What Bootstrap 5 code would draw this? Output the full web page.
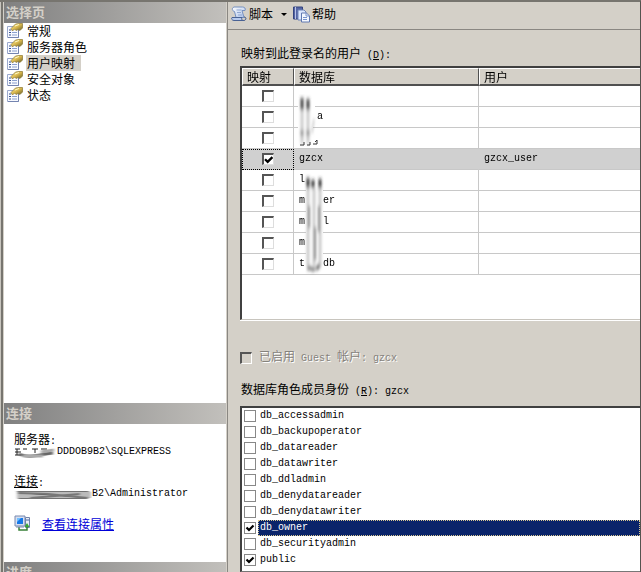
<!DOCTYPE html>
<html lang="zh-CN">
<head>
<meta charset="utf-8">
<meta name="viewport" content="width=device-width, initial-scale=1">
<title>用户映射</title>
<link href="https://cdn.jsdelivr.net/npm/bootstrap@5.3.0/dist/css/bootstrap.min.css" rel="stylesheet">
<style>
body{background:#d4d0c8;color:#000;font:12px/16px "Noto Sans CJK SC",sans-serif}
.window{border-top:2px solid #77756f;border-right:1px solid #55534f}
.mono{font-family:"Liberation Mono","Noto Sans CJK SC",monospace;font-size:10px}
.side{width:228px;border-left:1px solid #c8c5be;border-right:1px solid #8a8782;padding-right:1px}
.side-inner{border-left:2px solid #77756f;padding-left:1px}
.side-title{height:21px;line-height:20px;padding-left:2px;font-size:13px;font-weight:700;color:#d4d0c8;background:linear-gradient(90deg,#808080,#c2c0bc);margin:0}
.pages{height:380px;padding-left:3px}
.page-link-row{height:16px;color:#000;text-decoration:none;gap:3px}
.page-link-row span{padding:0 6px 0 1px;line-height:15px}
.page-link-row.active span{background:#d4d0c8}
.conn{height:138px;padding:9px 10px;line-height:12px}
.conn .mono{line-height:10px}
.conn a{color:#0000d8}
.account{margin-top:16px}
.props{margin-top:14px}
.toolbar{height:28px;border-bottom:1px solid #8a8782;padding:0 0 3px 3px}
.tool{border:0;background:none;padding:0;gap:2px;color:#000}
.content{padding:15px 0 0 12px}
.caption-row{padding-left:1px}
.well{border:2px solid #404040;border-right:0;border-bottom:0;background:#fff}
.grid-well{height:254px;margin-top:2px;border-bottom:1px solid #c8c5be;box-shadow:0 1px #fff}
.grid{width:100%;table-layout:fixed;border-collapse:separate;border-spacing:0;will-change:transform}
.grid th{height:18px;padding:0 4px;background:#d4d0c8;font-weight:400;line-height:15px;border:1px solid #fff;border-right-color:#505050;border-bottom:2px solid #505050}
.grid th:last-child{border-right:0}
.grid td{height:21px;padding:0 5px;line-height:20px;border-bottom:1px solid #c8c8c8;border-right:1px solid #c8c8c8}
.grid td:last-child{border-right:0}
.grid td:first-child{text-align:center}
.grid tr.picked td{background:#d0d0d0;border-right-color:#d0d0d0}
.grid tr.picked td:first-child{outline:1px dotted #000;outline-offset:-1px}
.c1{width:52px}.c2{width:185px}
.gap1{display:inline-block;width:18px}
.smudge{position:absolute;left:55px;top:26px;pointer-events:none}
.box{appearance:none;width:12px;height:12px;margin:0;background:#fff center/10px 10px no-repeat;border:1px solid #888;border-radius:0;flex:none}
.box:checked{background-image:url("data:image/svg+xml,%3Csvg xmlns='http://www.w3.org/2000/svg' viewBox='0 0 10 10'%3E%3Cpath d='M1.5 4.5 4 7 8.5 2.5' fill='none' stroke='%23000' stroke-width='2.2'/%3E%3C/svg%3E")}
.grid .box{display:block;margin:0 auto}
.grid .box,.guest .box{border:2px solid #555;border-right:1px solid #ddd;border-bottom:1px solid #ddd}
.guest{margin-top:28px;gap:7px;color:#85827c;text-shadow:1px 1px #fff}
.guest .box{background-color:#d4d0c8;border-right-color:#fff;border-bottom-color:#fff}
.roles-title{margin-top:14px;padding-left:1px}
.roles{margin-top:6px;height:166px;border-bottom:1px solid #777}
.role{height:16px;padding-left:2px}
.role label{flex:1;margin-left:2px;padding-left:2px;line-height:15px;height:16px}
.role.picked label{background:#0a246a;color:#fff;outline:1px dotted #d8c890;outline-offset:-1px}
</style>
<script src="https://cdn.jsdelivr.net/npm/bootstrap@5.3.0/dist/js/bootstrap.bundle.min.js"></script>
</head>
<body>
<svg width="0" height="0" class="position-absolute" aria-hidden="true">
<defs>
<linearGradient id="gold" x1="0" y1="0" x2="1" y2="1"><stop offset="0" stop-color="#fff3a0"/><stop offset=".5" stop-color="#d8b64c"/><stop offset="1" stop-color="#5c5a28"/></linearGradient>
<linearGradient id="sheet" x1="0" y1="0" x2="1" y2="1"><stop offset="0" stop-color="#fff"/><stop offset="1" stop-color="#a9bfe8"/></linearGradient>
<filter id="soft" x="-50%" y="-20%" width="200%" height="140%"><feGaussianBlur stdDeviation="1 2"/></filter>
<filter id="softline" x="-10%" y="-50%" width="120%" height="200%"><feGaussianBlur stdDeviation="1.5 .6"/></filter>
<symbol id="prop" viewBox="0 0 16 16">
<path d="M.5 3.500h11v11H.5z" fill="#f8faff" stroke="#9aa8cc"/><path d="M11.500 6v8.500H1" fill="none" stroke="#7484b0"/>
<path d="M2 7h2M2 9.500h2M2 12h2" stroke="#35508f"/><path d="M5 9.500h5M5 12h5" stroke="#8ba0cf"/>
<path d="M4 5.500 8.500 1 12 .5h3.500V5L13 7.500l-2-1-2 1L7.500 6 5.500 8z" fill="url(#gold)" stroke="#8b752f" stroke-width=".7"/><path d="M8 3l4-1.500" stroke="#fff8c4"/>
</symbol>
</defs>
</svg>
<div class="window d-flex vh-100 overflow-hidden">
<aside class="side flex-shrink-0 overflow-hidden">
<div class="side-inner h-100">
<h2 class="side-title">选择页</h2>
<nav class="pages bg-white d-flex flex-column align-items-start">
<a href="#" class="page-link-row d-flex"><svg width="16" height="16"><use href="#prop"/></svg><span>常规</span></a>
<a href="#" class="page-link-row d-flex"><svg width="16" height="16"><use href="#prop"/></svg><span>服务器角色</span></a>
<a href="#" class="page-link-row d-flex active" aria-current="page"><svg width="16" height="16"><use href="#prop"/></svg><span>用户映射</span></a>
<a href="#" class="page-link-row d-flex"><svg width="16" height="16"><use href="#prop"/></svg><span>安全对象</span></a>
<a href="#" class="page-link-row d-flex"><svg width="16" height="16"><use href="#prop"/></svg><span>状态</span></a>
</nav>
<h2 class="side-title">连接</h2>
<div class="conn bg-white">
<div>服务器<span class="mono">:</span></div>
<div class="mono d-flex"><svg width="43" height="12"><path d="M1 2h5M3 2v6M1 8h6M9 2h4M18 2h6M21 2v4M27 2h6M1 5h6" stroke="#222" fill="none"/><g filter="url(#softline)"><path d="M5 7c10 5 22 0 34-1" stroke="#666" stroke-width="3" fill="none"/><path d="M27 5l13-2M9 9h20" stroke="#aaa" stroke-width="3"/></g></svg><span>DDDOB9B2\SQLEXPRESS</span></div>
<div class="account"><u>连接</u><span class="mono">:</span></div>
<div class="mono d-flex"><svg width="78" height="12"><g filter="url(#softline)"><path d="M3 3h72M4 9h70" stroke="#444" stroke-width="1.500"/><path d="M3 6h74" stroke="#bbb" stroke-width="6"/><path d="M4 4l30 1 40 4M16 9l50-4" stroke="#777" stroke-width="2"/></g></svg><span>B2\Administrator</span></div>
<div class="props d-flex gap-2 align-items-center">
<svg width="20" height="18" viewBox="0 0 20 18"><path d="M1 1h10v10H1z" fill="#d6def0" stroke="#7889ae"/><path d="M3 3h6v6H3z" fill="#1678e8"/><path d="M3 3h4L3 7z" fill="#72bfff"/><path d="M11.500 2.500h4v10h-4z" fill="#e8edf7" stroke="#7082a8"/><path d="M12 5h3" stroke="#5068a0"/><path d="M5 12v3h8v-4m0 4h-8" fill="none" stroke="#388038" stroke-width="1.500"/><path d="M10.500 12 13 8l2.500 4z" fill="#37a737"/><path d="M2 12h8" stroke="#7889ae"/></svg>
<a href="#">查看连接属性</a></div>
</div>
<h2 class="side-title">进度</h2>
</div>
</aside>
<main class="flex-grow-1 overflow-hidden">
<div class="toolbar d-flex align-items-center">
<button type="button" class="tool d-flex align-items-center"><svg width="16" height="16" viewBox="0 0 16 16"><path d="M3 1h8.500c2 0 3.500 1.500 2.500 3.500h-3l2 7H5L3.500 5.500C1 5 .5 2 3 1z" fill="url(#sheet)" stroke="#7590c0"/><path d="M1 11.500h10c-1 2 0 3 2 3H3c-2 0-3-2-2-3z" fill="#b8cbee" stroke="#496294"/><path d="M13 11c2.500 0 2.500 3 0 3.500" fill="none" stroke="#354f82"/><path d="M5.500 4h5M6 6.500h4M7 9h4" stroke="#90a8d2"/></svg><span>脚本</span><svg width="14" height="8" class="ms-1"><path d="M2 3h6L5 6z"/></svg></button>
<button type="button" class="tool d-flex align-items-center"><svg width="17" height="17" viewBox="0 0 17 17"><path d="M.5 1h9v12h-9z" fill="#5565a5" stroke="#35447e"/><path d="M2.500 1v12" stroke="#b9c4e8"/><path d="M5 4h6l2 2v8H5z" fill="#dbe7ff" stroke="#7186b7"/><path d="M8.500 7h5l3 3v6h-8z" fill="#f4f8ff" stroke="#6079b0"/><path d="M13 7v3h3M10 11.500h4M10 13.500h4" fill="none" stroke="#7893cc"/></svg><span>帮助</span></button>
</div>
<div class="content">
<div class="caption-row">映射到此登录名的用户<span class="mono"> (<u>D</u>):</span></div>
<div class="well grid-well position-relative">
<table class="grid">
<colgroup><col class="c1"><col class="c2"><col></colgroup>
<thead><tr><th>映射</th><th>数据库</th><th>用户</th></tr></thead>
<tbody class="mono">
<tr><td><input class="box" type="checkbox" aria-label="映射 1"></td><td></td><td></td></tr>
<tr><td><input class="box" type="checkbox" aria-label="映射 2"></td><td><span class="gap1"></span>a</td><td></td></tr>
<tr><td><input class="box" type="checkbox" aria-label="映射 3"></td><td></td><td></td></tr>
<tr class="picked"><td><input class="box" type="checkbox" aria-label="映射 gzcx" checked></td><td>gzcx</td><td>gzcx_user</td></tr>
<tr><td><input class="box" type="checkbox" aria-label="映射 5"></td><td>l</td><td></td></tr>
<tr><td><input class="box" type="checkbox" aria-label="映射 6"></td><td>m<span class="gap1"></span>er</td><td></td></tr>
<tr><td><input class="box" type="checkbox" aria-label="映射 7"></td><td>m<span class="gap1"></span>l</td><td></td></tr>
<tr><td><input class="box" type="checkbox" aria-label="映射 8"></td><td>m</td><td></td></tr>
<tr><td><input class="box" type="checkbox" aria-label="映射 9"></td><td>t<span class="gap1"></span>db</td><td></td></tr>
</tbody>
</table>
<svg class="smudge" width="30" height="184" viewBox="0 0 30 184" aria-hidden="true">
<path d="M1 2h17v16l-2 15v21H1zM9 84h17v96H9z" fill="#fff"/>
<g filter="url(#soft)" fill="none" stroke-width="3"><path d="M5 4v12M11 5v11" stroke="#444"/><path d="M5 16v34M11 16v34" stroke="#ccc"/><path d="M17 25l-2 14" stroke="#aaa" stroke-width="1"/><path d="M5 36v6M11 36v6" stroke="#999"/>
<path d="M11 84v10M16 86v8M23 85v10" stroke="#333"/><path d="M11 94v78M17 94v78M23 94v78" stroke="#ccc"/><path d="M12 112v22M22 112v26M18 133v33" stroke="#888" stroke-width="2"/><path d="M10 174h4M14 175h4M19 175l4-4" stroke="#444"/></g>
<path d="M3 51h4v-3M10 51h3v-3M16 50h4v-4l-2 2" fill="none" stroke="#333"/>
</svg>
</div>
<div class="guest d-flex align-items-center"><input class="box" type="checkbox" id="guest" disabled><label for="guest">已启用<span class="mono"> Guest </span>帐户<span class="mono">: gzcx</span></label></div>
<div class="roles-title">数据库角色成员身份<span class="mono"> (<u>R</u>): gzcx</span></div>
<div class="well roles mono">
<div class="role d-flex align-items-center"><input class="box" type="checkbox" id="r1"><label for="r1">db_accessadmin</label></div>
<div class="role d-flex align-items-center"><input class="box" type="checkbox" id="r2"><label for="r2">db_backupoperator</label></div>
<div class="role d-flex align-items-center"><input class="box" type="checkbox" id="r3"><label for="r3">db_datareader</label></div>
<div class="role d-flex align-items-center"><input class="box" type="checkbox" id="r4"><label for="r4">db_datawriter</label></div>
<div class="role d-flex align-items-center"><input class="box" type="checkbox" id="r5"><label for="r5">db_ddladmin</label></div>
<div class="role d-flex align-items-center"><input class="box" type="checkbox" id="r6"><label for="r6">db_denydatareader</label></div>
<div class="role d-flex align-items-center"><input class="box" type="checkbox" id="r7"><label for="r7">db_denydatawriter</label></div>
<div class="role picked d-flex align-items-center"><input class="box" type="checkbox" id="r8" checked><label for="r8">db_owner</label></div>
<div class="role d-flex align-items-center"><input class="box" type="checkbox" id="r9"><label for="r9">db_securityadmin</label></div>
<div class="role d-flex align-items-center"><input class="box" type="checkbox" id="r10" checked><label for="r10">public</label></div>
</div>
</div>
</main>
</div>
</body>
</html>
